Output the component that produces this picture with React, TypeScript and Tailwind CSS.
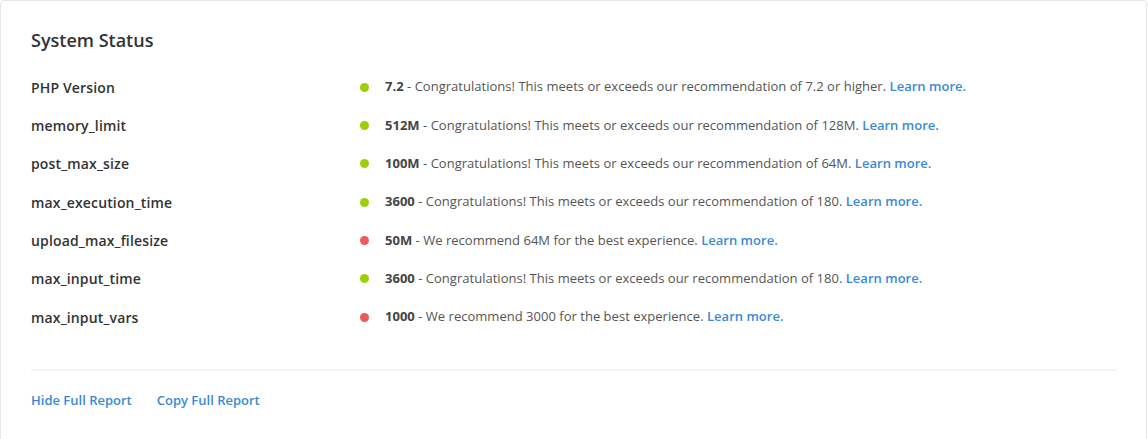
const rows = [
  { label: "PHP Version", ok: true, value: "7.2", text: "Congratulations! This meets or exceeds our recommendation of 7.2 or higher." },
  { label: "memory_limit", ok: true, value: "512M", text: "Congratulations! This meets or exceeds our recommendation of 128M." },
  { label: "post_max_size", ok: true, value: "100M", text: "Congratulations! This meets or exceeds our recommendation of 64M." },
  { label: "max_execution_time", ok: true, value: "3600", text: "Congratulations! This meets or exceeds our recommendation of 180." },
  { label: "upload_max_filesize", ok: false, value: "50M", text: "We recommend 64M for the best experience." },
  { label: "max_input_time", ok: true, value: "3600", text: "Congratulations! This meets or exceeds our recommendation of 180." },
  { label: "max_input_vars", ok: false, value: "1000", text: "We recommend 3000 for the best experience." },
];

export default function App() {
  return (
    <div className="min-h-screen bg-white font-['Open_Sans',sans-serif]">
      <div className="w-[1147px] h-[460px] rounded-[4px] border border-[#e6e6e6] bg-white px-[30px] pt-[24px]">
        <h2 className="text-[18px] leading-[30px] font-semibold text-[#333]">System Status</h2>

        <div className="mt-[13px]">
          {rows.map((r) => (
            <div key={r.label} className="flex h-[38.33px] items-center">
              <div className="w-[329px] shrink-0 text-[14px] font-semibold tracking-[0.15px] text-[#333]">{r.label}</div>
              <span
                className={`h-[9px] w-[9px] shrink-0 rounded-full ${r.ok ? "bg-[#9ccf0b]" : "bg-[#ec5a5a]"}`}
              />
              <p className="ml-[16px] text-[13px] tracking-[0.02px] text-[#555]">
                <span className="font-bold text-[#444]">{r.value}</span> - {r.text}{" "}
                <a href="#" className="font-semibold text-[#3a8ad8]">Learn more.</a>
              </p>
            </div>
          ))}
        </div>

        <div className="mt-[33px] h-[2px] w-[1086px] bg-[#f2f4f7]" />

        <div className="flex gap-[25px] pt-[19px] text-[13px] leading-[20px] font-semibold text-[#3a8ad8]">
          <a href="#">Hide Full Report</a>
          <a href="#">Copy Full Report</a>
        </div>
      </div>
    </div>
  );
}
